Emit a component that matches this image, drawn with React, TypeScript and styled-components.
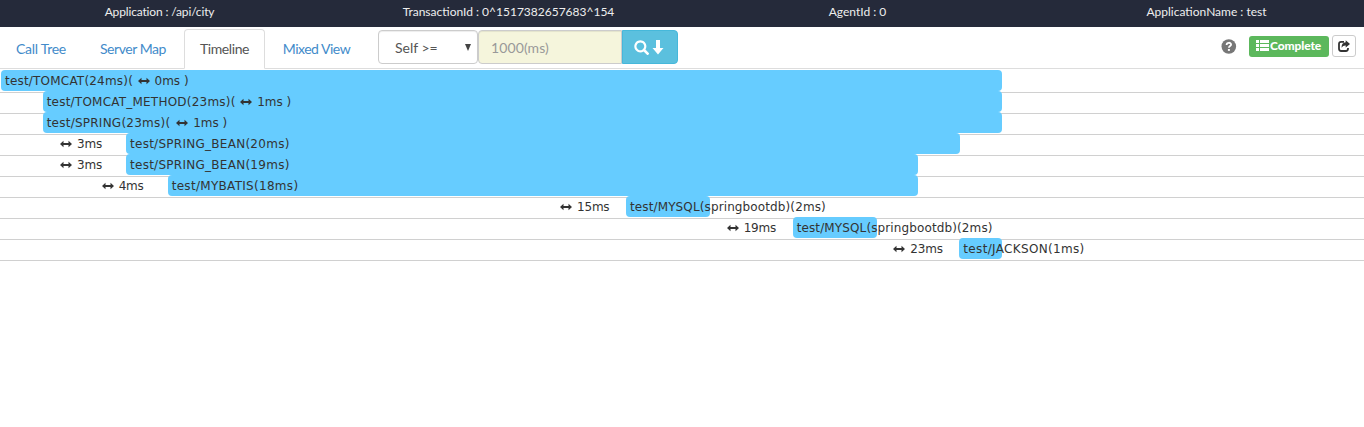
import React from "react";
import styled, { createGlobalStyle } from "styled-components";

const GlobalStyle = createGlobalStyle`
  *, *::before, *::after { box-sizing: border-box; }
  html, body { margin: 0; background: #fff; overflow: hidden; }
  body { font: 15px/21px Lato, "Liberation Sans", sans-serif; color: #333; }
`;

const Header = styled.header`
  display: grid;
  grid-template-columns: repeat(4, 349px);
  margin: 0 -15px;
  height: 27px;
  background: #252a3a;
  color: #eee;
  font-size: 12px;
  line-height: 23px;
  text-align: center;
  white-space: nowrap;
`;

const HeaderItem = styled.span<{ $spacing?: number }>`
  letter-spacing: ${(p) => p.$spacing ?? 0}px;
`;

const Toolbar = styled.div`
  display: flex;
  height: 42px;
  padding-top: 2px;
  border-bottom: 1px solid #ddd;
`;

const Tab = styled.a<{ $active?: boolean; $width: number; $spacing: number }>`
  flex: none;
  width: ${(p) => p.$width}px;
  height: 40px;
  margin-right: 2px;
  padding: 8px 0 0;
  text-align: center;
  font-size: 14px;
  letter-spacing: ${(p) => p.$spacing}px;
  white-space: nowrap;
  color: ${(p) => (p.$active ? "#555" : "#428bca")};
  background: ${(p) => (p.$active ? "#fff" : "transparent")};
  border: 1px solid ${(p) => (p.$active ? "#ddd" : "transparent")};
  border-bottom-color: ${(p) => (p.$active ? "#fff" : "transparent")};
  border-radius: 4px 4px 0 0;
`;

const SearchGroup = styled.div`
  display: flex;
  height: 34px;
  margin: 1px 0 0 10px;
`;

const Select = styled.div`
  display: flex;
  justify-content: space-between;
  align-items: center;
  width: 100px;
  padding: 0 6px 0 16px;
  border: 1px solid #ccc;
  border-radius: 4px;
  color: #555;
  font-size: 14px;
  box-shadow: inset 0 1px 1px rgba(0, 0, 0, 0.075);
`;

const Field = styled.input`
  width: 144px;
  padding: 0 12px;
  border: 1px solid #ccc;
  border-radius: 4px 0 0 4px;
  background: #f5f5dc;
  font: 14px Lato, sans-serif;
  letter-spacing: 0.1px;
  box-shadow: inset 0 1px 1px rgba(0, 0, 0, 0.075);
  &::placeholder { color: #999; opacity: 1; }
`;

const SearchButton = styled.button`
  display: flex;
  align-items: center;
  justify-content: center;
  gap: 2px;
  width: 56px;
  padding: 0 2px 0 0;
  border: 1px solid #46b8da;
  border-radius: 0 4px 4px 0;
  background: #5bc0de;
  color: #fff;
`;

const Actions = styled.div`
  display: flex;
  align-items: center;
  height: 22px;
  margin: 6px 8px 0 auto;
`;

const HelpIcon = styled.svg`
  margin-right: 12px;
`;

const Complete = styled.span`
  display: flex;
  align-items: center;
  gap: 1px;
  width: 80px;
  height: 21px;
  padding: 0 0 1px 7px;
  border-radius: 3px;
  background: #5cb85c;
  color: #fff;
  font-size: 12px;
  font-weight: 900;
  letter-spacing: -0.1px;
`;

const ShareButton = styled.button`
  display: flex;
  align-items: center;
  justify-content: center;
  width: 24px;
  height: 22px;
  margin-left: 3px;
  padding: 0;
  border: 1px solid #ccc;
  border-radius: 3px;
  background: #fff;
  color: #333;
`;

const Timeline = styled.main`
  padding-top: 3px;
  font: 12px/21px "DejaVu Sans", Verdana, sans-serif;
  color: #333;
`;

const Row = styled.div`
  display: flex;
  height: 21px;
  padding-left: 1px;
  border-bottom: 1px solid #d0d0d0;
  white-space: nowrap;
`;

const Offset = styled.div`
  flex: none;
  margin-top: -2px;
`;

const Gap = styled.span`
  display: flex;
  align-items: center;
  gap: 5px;
  width: 66px;
  height: 22px;
  margin-left: auto;
  letter-spacing: -0.2px;
`;

const Bar = styled.div`
  display: flex;
  align-items: center;
  flex: none;
  height: 21px;
  margin-top: -2px;
  padding: 1px 0 0 4px;
  border-radius: 4px;
  background: #66ccff;
`;

const Label = styled.span<{ $width: number; $spacing: number }>`
  flex: none;
  width: ${(p) => p.$width}px;
  letter-spacing: ${(p) => p.$spacing}px;
`;

const InlineGap = styled.span`
  display: flex;
  align-items: center;
  gap: 5px;
  margin-left: 4px;
`;

const ResizeIcon = () => (
  <svg width="12" height="8" viewBox="0 0 12 8" fill="currentColor">
    <path d="M0 4 3.500 .7V3h5V.7L12 4 8.500 7.300V5h-5v2.300z" />
  </svg>
);

const MS_PX = 1000 / 24;

type Call = {
  name: string;
  width: number;
  spacing: number;
  start: number;
  ms: number;
  gap?: number;
  inline?: number;
};

const calls: Call[] = [
  { name: "test/TOMCAT(24ms)(", width: 128.5, spacing: 0.2, start: 0, ms: 24, inline: 0 },
  { name: "test/TOMCAT_METHOD(23ms)(", width: 189.5, spacing: 0.22, start: 1, ms: 23, inline: 1 },
  { name: "test/SPRING(23ms)(", width: 125.5, spacing: 0.24, start: 1, ms: 23, inline: 1 },
  { name: "test/SPRING_BEAN(20ms)", width: 160, spacing: 0.27, start: 3, ms: 20, gap: 3 },
  { name: "test/SPRING_BEAN(19ms)", width: 160, spacing: 0.27, start: 3, ms: 19, gap: 3 },
  { name: "test/MYBATIS(18ms)", width: 128, spacing: 0.3, start: 4, ms: 18, gap: 4 },
  { name: "test/MYSQL(springbootdb)(2ms)", width: 198, spacing: 0.12, start: 15, ms: 2, gap: 15 },
  { name: "test/MYSQL(springbootdb)(2ms)", width: 198, spacing: 0.12, start: 19, ms: 2, gap: 19 },
  { name: "test/JACKSON(1ms)", width: 123, spacing: 0.33, start: 23, ms: 1, gap: 23 },
];

export default function App() {
  return (
    <>
      <GlobalStyle />
      <Header>
        <HeaderItem $spacing={-0.15}>Application : /api/city</HeaderItem>
        <HeaderItem>TransactionId : 0^1517382657683^154</HeaderItem>
        <HeaderItem>AgentId : 0</HeaderItem>
        <HeaderItem>ApplicationName : test</HeaderItem>
      </Header>
      <Toolbar>
        <Tab $width={82} $spacing={-0.27}>Call Tree</Tab>
        <Tab $width={98} $spacing={-0.45}>Server Map</Tab>
        <Tab $width={81} $spacing={-0.4} $active>Timeline</Tab>
        <Tab $width={99} $spacing={-0.5}>Mixed View</Tab>
        <SearchGroup>
          <Select>
            Self &gt;=
            <svg width="6" height="7" viewBox="0 0 6 7" fill="#444">
              <path d="M0 0h6L3 7z" />
            </svg>
          </Select>
          <Field placeholder="1000(ms)" />
          <SearchButton aria-label="Search">
            <svg width="15" height="15" viewBox="0 0 1200 1200" fill="currentColor">
              <path transform="matrix(1 0 0 -1 0 1200)" d="M507 1177q98 0 187.500 -38.500t154.500 -103.500t103.500 -154.500t38.500 -187.500q0 -141 -78 -262l300 -299q8 -8 8 -18.500t-8 -18.500l-109 -108q-7 -8 -17.500 -8t-18.500 8l-300 299q-119 -77 -261 -77q-98 0 -188 38.500t-154.500 103t-103 154.500t-38.500 188t38.500 187.500t103 154.500t154.500 103.500t188 38.500zM506.500 1003q-89.500 0 -155.500 -44t-110 -110.500t-44 -156t44 -155.500t110 -110t155.500 -44t156 44t110.500 110t44 155.500t-44 156t-110.500 110.500t-156 44z" />
            </svg>
            <svg width="13" height="15" viewBox="0 0 13 15" fill="currentColor">
              <path d="M5 0h4v8h3.500L7 14.500 1.500 8H5z" />
            </svg>
          </SearchButton>
        </SearchGroup>
        <Actions>
          <HelpIcon width="16" height="15" viewBox="0 0 16 15">
            <circle cx="7.800" cy="7.500" r="7.300" fill="#777" />
            <path d="M5.600 6c0-3 4.500-2.800 4.500-.4C10.100 7.200 7.900 7 7.900 8.800" fill="none" stroke="#fff" strokeWidth="1.800" />
            <path d="M6.900 10h2v1.900h-2z" fill="#fff" />
          </HelpIcon>
          <Complete>
            <svg width="13" height="11" viewBox="0 0 13 11" fill="currentColor">
              <path d="M0 0h3v3H0zM4 0h9v3H4zM0 4h3v3H0zM4 4h9v3H4zM0 8h3v3H0zM4 8h9v3H4z" />
            </svg>
            Complete
          </Complete>
          <ShareButton aria-label="Open in new window">
            <svg width="12" height="12" viewBox="0 0 12 12">
              <path d="M6 1.800H3.200Q1 1.800 1 4v4.800Q1 11 3.200 11h4.600Q10 11 10 8.800V8" fill="none" stroke="currentColor" strokeWidth="1.800" />
              <path d="M7.700 .3 12 3.900 7.700 7.500V5.500Q5 5.300 3.500 7.800 3.500 2.600 7.700 2.300z" fill="currentColor" />
            </svg>
          </ShareButton>
        </Actions>
      </Toolbar>
      <Timeline>
        {calls.map((call, i) => (
          <Row key={i}>
            <Offset style={{ width: call.start * MS_PX }}>
              {call.gap !== undefined && (
                <Gap>
                  <ResizeIcon />
                  {call.gap}ms
                </Gap>
              )}
            </Offset>
            <Bar style={{ width: call.ms * MS_PX + 0.7 }}>
              <Label $width={call.width} $spacing={call.spacing}>{call.name}</Label>
              {call.inline !== undefined && (
                <InlineGap>
                  <ResizeIcon />
                  {call.inline}ms )
                </InlineGap>
              )}
            </Bar>
          </Row>
        ))}
      </Timeline>
    </>
  );
}
